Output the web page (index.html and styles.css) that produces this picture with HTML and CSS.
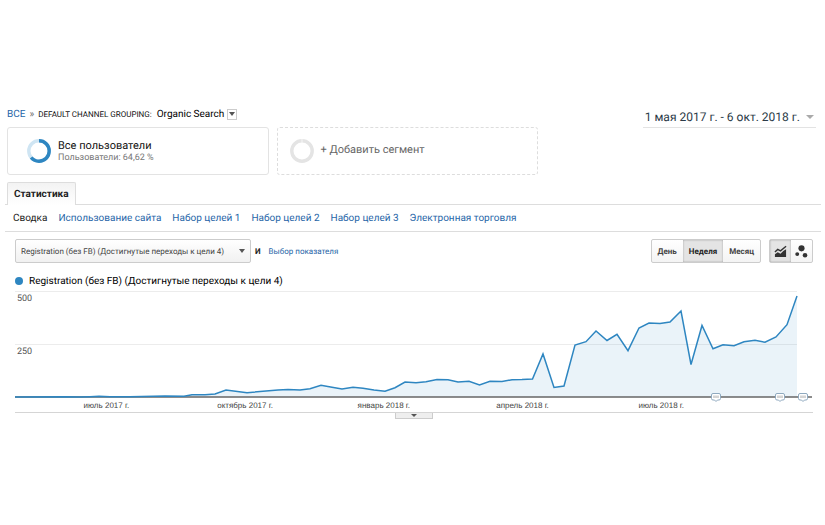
FILE: index.html
```html
<!DOCTYPE html>
<html lang="ru">
<head>
    <meta charset="UTF-8">
    <meta name="viewport" content="width=device-width, initial-scale=1.0">
    <title>Organic Search</title>
    <link rel="stylesheet" href="styles.css">
</head>
<body>
    <header class="top">
        <div class="segments-side">
            <nav class="breadcrumbs">
                <a href="#">ВСЕ</a>
                <span class="sep">»</span>
                <span class="crumb">DEFAULT CHANNEL GROUPING:</span>
                <span class="crumb-value">Organic Search</span>
                <button class="crumb-menu" aria-label="Меню"><span class="arrow"></span></button>
            </nav>
            <div class="segments">
                <div class="segment">
                    <svg class="ring" viewBox="0 0 24 24">
                        <circle cx="12" cy="12" r="10.2" fill="none" stroke="#cfe5f3" stroke-width="3.4"/>
                        <circle cx="12" cy="12" r="10.2" fill="none" stroke="#2e86c1" stroke-width="3.4" pathLength="100" stroke-dasharray="64 36" transform="rotate(-90 12 12)"/>
                    </svg>
                    <div>
                        <div class="segment-title">Все пользователи</div>
                        <div class="segment-sub">Пользователи: 64,62 %</div>
                    </div>
                </div>
                <button class="segment segment-add">
                    <svg class="ring" viewBox="0 0 24 24">
                        <circle cx="12" cy="12" r="10.2" fill="none" stroke="#e4e4e4" stroke-width="3.4"/>
                        <path d="M12 0v4" stroke="#f6f6f6"/>
                    </svg>
                    <span>+ Добавить сегмент</span>
                </button>
            </div>
        </div>
        <button class="date-range">1 мая 2017 г. - 6 окт. 2018 г.<span class="arrow arrow-date"></span></button>
    </header>

    <main class="report">
        <div class="tabs"><button class="tab">Статистика</button></div>
        <nav class="subnav">
            <a href="#" class="current">Сводка</a>
            <a href="#">Использование сайта</a>
            <a href="#">Набор целей 1</a>
            <a href="#">Набор целей 2</a>
            <a href="#">Набор целей 3</a>
            <a href="#">Электронная торговля</a>
        </nav>

        <div class="toolbar">
            <div class="metric">
                <select class="metric-select" aria-label="Показатель">
                    <option>Registration (без FB) (Достигнутые переходы к цели 4)</option>
                </select>
                <span class="arrow arrow-select"></span>
            </div>
            <span class="and">И</span>
            <a href="#" class="metric-link">Выбор показателя</a>
            <div class="group period">
                <button>День</button>
                <button class="active">Неделя</button>
                <button>Месяц</button>
            </div>
            <div class="group views">
                <button class="active" aria-label="График">
                    <svg viewBox="0 0 14 13">
                        <path d="M1 12.5V9.5l3-2.3 3 1.6L10 6l3-2v8.5z" fill="#333"/>
                        <path d="M1 7l3-2.7 3 1.5L13 .8" fill="none" stroke="#333" stroke-width="1.5"/>
                    </svg>
                </button>
                <button aria-label="Диаграмма движения">
                    <svg viewBox="0 0 14 14">
                        <circle cx="7" cy="3.6" r="3.3" fill="#333"/>
                        <circle cx="2.4" cy="9.8" r="2.1" fill="#333"/>
                        <circle cx="10.8" cy="11" r="2.5" fill="#333"/>
                    </svg>
                </button>
            </div>
        </div>

        <div class="legend"><span class="dot"></span>Registration (без FB) (Достигнутые переходы к цели 4)</div>

        <div class="chart">
            <svg class="plot" viewBox="0 0 797 107" preserveAspectRatio="none">
                <path d="M0 0.5H782M0 53.5H782" stroke="#ececec"/>
                <path class="area" d="M0 106V105.5L169 105L177 103.5L190 103.5L200 103L211 99L232 101.7L263 99L273 98.5L285 99L295 97.7L306 94.3L317 96.3L327 98L338 96.2L348 97.3L359 99L370 100.3L380 96.7L390 91L401 91.7L411 90.7L422 88.5L433 88.7L443 91L454 90.3L464.5 94L475 90.3L487 90.5L497 88.7L507 88.5L517.5 88L528 63L539 96.5L549 95L560 54L571 50.7L581 40L592 49.5L602 43.3L613 59.7L624 37L634 32L645 32.5L655 31L666 20L676 73.5L687 34.5L698 57.7L708 53.7L719 54.7L729 50.7L740 49.3L750 51.3L761 46L772 33.7L782 5V106z"/>
                <path d="M0 106H797" stroke="#666" stroke-width="1.5"/>
                <polyline class="line" points="0,106 50,105.7 65,106 75,105.7 84,105.3 95,105.7 115,105.7 150,105 169,105.3 177,103.7 190,103.7 200,103 211,99 232,101.7 263,99 273,98.5 285,99 295,97.7 306,94.3 317,96.3 327,98 338,96.2 348,97.3 359,99 370,100.3 380,96.7 390,91 401,91.7 411,90.7 422,88.5 433,88.7 443,91 454,90.3 464.5,94 475,90.3 487,90.5 497,88.7 507,88.5 517.5,88 528,63 539,96.5 549,95 560,54 571,50.7 581,40 592,49.5 602,43.3 613,59.7 624,37 634,32 645,32.5 655,31 666,20 676,73.5 687,34.5 698,57.7 708,53.7 719,54.7 729,50.7 740,49.3 750,51.3 761,46 772,33.7 782,5"/>
            </svg>
            <span class="y-label y-max">500</span>
            <span class="y-label y-mid">250</span>
            <svg class="note note-1" viewBox="0 0 10 9"><path d="M2 .5h6q1.5 0 1.5 1.5v3.5q0 1.5-1.5 1.5H6.5L5 8.5 3.5 7H2Q.5 7 .5 5.5V2Q.5.5 2 .5z"/><path class="note-text" d="M3 2.5v2.5M5 2.5v2.5M7 2.5v2.5"/></svg>
            <svg class="note note-2" viewBox="0 0 10 9"><path d="M2 .5h6q1.5 0 1.5 1.5v3.5q0 1.5-1.5 1.5H6.5L5 8.5 3.5 7H2Q.5 7 .5 5.5V2Q.5.5 2 .5z"/><path class="note-text" d="M3 2.5v2.5M5 2.5v2.5M7 2.5v2.5"/></svg>
            <svg class="note note-3" viewBox="0 0 10 9"><path d="M2 .5h6q1.5 0 1.5 1.5v3.5q0 1.5-1.5 1.5H6.5L5 8.5 3.5 7H2Q.5 7 .5 5.5V2Q.5.5 2 .5z"/><path class="note-text" d="M3 2.5v2.5M5 2.5v2.5M7 2.5v2.5"/></svg>
        </div>
        <div class="x-axis">
            <span>июль 2017 г.</span>
            <span>октябрь 2017 г.</span>
            <span>январь 2018 г.</span>
            <span>апрель 2018 г.</span>
            <span>июль 2018 г.</span>
        </div>
        <div class="expander"><button aria-label="Развернуть"><span class="arrow"></span></button></div>
    </main>
</body>
</html>
```
FILE: styles.css
```css
* {
    margin: 0;
    padding: 0;
    box-sizing: border-box;
}
body {
    background: #fff;
    color: #222;
    font-family: Roboto, Arial, sans-serif;
    font-size: 10px;
    padding-top: 107px;
    text-rendering: geometricPrecision;
}
a {
    color: #2766a8;
    text-decoration: none;
}
button, select {
    font: inherit;
    color: inherit;
    background: none;
    border: none;
    cursor: pointer;
    text-rendering: inherit;
}
.arrow {
    display: block;
    border: 3px solid transparent;
    border-top: 4px solid #555;
    border-bottom: 0;
}

/* Header */
.top {
    display: flex;
    justify-content: space-between;
    align-items: flex-start;
    padding: 0 9px 0 7px;
}
.segments-side {
    flex: 0 1 531px;
}
.breadcrumbs {
    display: flex;
    align-items: center;
    height: 14px;
    font-size: 10px;
    white-space: nowrap;
}
.sep {
    margin: 0 4px;
    color: #666;
}
.crumb {
    font-size: 8px;
    color: #111;
}
.crumb-value {
    margin: 0 3px 0 5px;
    color: #000;
}
.crumb-menu {
    padding: 2px 1px 3px;
    border: 1px solid #ccc;
}
.segments {
    display: grid;
    grid-template-columns: 1fr 1fr;
    gap: 8px;
    margin-top: 6px;
}
.segment {
    display: flex;
    align-items: center;
    gap: 7px;
    height: 48px;
    padding-left: 19px;
    border: 1px solid #e3e3e3;
    border-radius: 3px;
}
.segment-add {
    padding-left: 12px;
    border: 1px dashed #ddd;
    font-size: 11px;
    color: #666;
}
.segment-add span {
    padding-bottom: 3px;
}
.ring {
    width: 24px;
    height: 24px;
}
.segment-title {
    font-size: 11px;
    line-height: 13px;
    color: #111;
}
.segment-sub {
    font-size: 9px;
    line-height: 12px;
    color: #777;
}
.date-range {
    display: flex;
    align-items: center;
    gap: 6px;
    height: 21px;
    padding: 0 2px;
    border-bottom: 1px solid #e3e3e3;
    font-size: 12px;
    color: #2b3a47;
    white-space: nowrap;
}
.arrow-date {
    border-width: 4px 4px 0;
    border-top-color: #aaa;
}

/* Tabs */
.report {
    margin: 7px 4px 0 5px;
}
.tabs {
    display: flex;
    padding-left: 2px;
    border-bottom: 1px solid #ddd;
}
.tab {
    height: 23px;
    padding: 0 6px;
    margin-bottom: -1px;
    border: 1px solid #ddd;
    border-bottom: 0;
    border-radius: 2px 2px 0 0;
    background: linear-gradient(#f3f3f3, #fff);
    font-weight: bold;
}
.subnav {
    display: flex;
    gap: 11px;
    height: 27px;
    align-items: center;
    padding-left: 8px;
    border-bottom: 1px solid #ddd;
    white-space: nowrap;
}
.subnav .current {
    color: #222;
}

/* Toolbar */
.toolbar {
    display: flex;
    align-items: center;
    margin: 7px 8px 0 10px;
    font-size: 8px;
}
.metric {
    position: relative;
    flex: 0 1 236px;
}
.metric-select {
    display: block;
    appearance: none;
    width: 100%;
    height: 24px;
    padding: 0 14px 0 5px;
    border: 1px solid #ccc;
    border-radius: 2px;
    background: linear-gradient(#fff, #f1f1f1);
    color: #444;
}
.arrow-select {
    position: absolute;
    right: 6px;
    top: 10px;
    pointer-events: none;
}
.and {
    margin: 0 8px 0 4px;
    font-weight: bold;
}
.group {
    display: flex;
    border: 1px solid #ccc;
    border-radius: 2px;
    background: linear-gradient(#fff, #f4f4f4);
}
.group button {
    height: 22px;
    padding: 0 6px;
    font-weight: bold;
    color: #444;
}
.group .active {
    background: #e4e4e4;
    box-shadow: inset 0 0 2px #999;
    color: #222;
}
.period {
    margin-left: auto;
}
.views {
    margin-left: 8px;
}
.views button {
    width: 21px;
    padding: 0 4px;
}
.views svg {
    display: block;
    width: 13px;
    height: 13px;
}

/* Chart */
.legend {
    display: flex;
    align-items: center;
    gap: 6px;
    height: 20px;
    margin: 8px 0 0 10px;
    color: #000;
}
.dot {
    width: 8px;
    height: 8px;
    border-radius: 50%;
    background: #2e86c1;
}
.chart {
    position: relative;
    margin: 0 9px 0 10px;
}
.plot {
    display: block;
    width: 100%;
    height: 107px;
}
.area {
    fill: #2e86c1;
    fill-opacity: 0.1;
}
.line {
    fill: none;
    stroke: #2e86c1;
    stroke-width: 1.5px;
}
.y-label {
    position: absolute;
    left: 2px;
    font-size: 9px;
    line-height: 10px;
    color: #555;
}
.y-max {
    top: 3px;
}
.y-mid {
    top: 56px;
}
.note {
    position: absolute;
    bottom: -4px;
    width: 10px;
    height: 9px;
    fill: #fff;
    stroke: #8fa9bf;
}
.note-text {
    stroke: #aaa;
}
.note-1 {
    left: 87.3%;
}
.note-2 {
    left: 95.4%;
}
.note-3 {
    left: 98.2%;
}
.x-axis {
    display: grid;
    grid-template-columns: repeat(5, 1fr);
    align-items: center;
    height: 14px;
    width: 85%;
    margin-left: 32px;
    font: 8px "Liberation Sans", Arial, sans-serif;
    color: #444;
    text-align: center;
}
.expander {
    display: flex;
    justify-content: center;
    margin: 0 8px 0 10px;
    border-top: 1px solid #d5d5d5;
}
.expander button {
    display: flex;
    justify-content: center;
    width: 38px;
    height: 6px;
    border: 1px solid #ccc;
    border-top: 0;
    background: #eee;
}
.expander .arrow {
    margin-top: 1px;
    border-top-width: 3px;
}
```
